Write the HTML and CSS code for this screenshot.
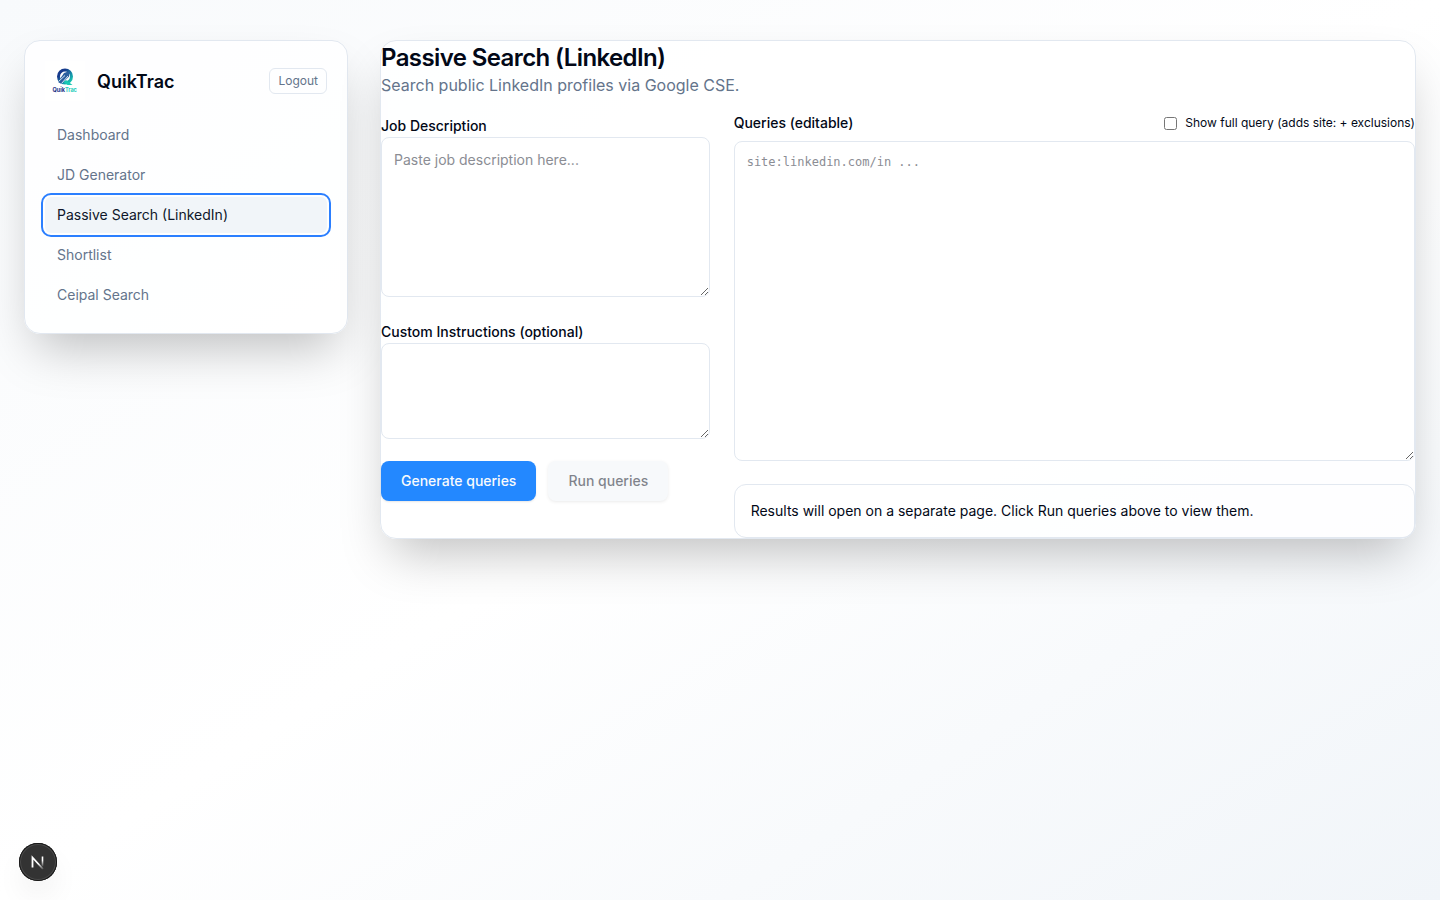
FILE: index.html
```html
<!DOCTYPE html>
<html lang="en">
<head>
<meta charset="utf-8">
<meta name="viewport" content="width=device-width, initial-scale=1">
<title>QuikTrac</title>
<link rel="stylesheet" href="styles.css">
</head>
<body>
<div class="layout">
  <aside class="card sidebar">
    <div class="brand-row">
      <svg class="logo" viewBox="0 0 80 80" role="img" aria-label="QuikTrac logo">
        <defs>
          <linearGradient id="ring" x1="0" y1="0" x2="1" y2="1">
            <stop offset="0.25" stop-color="#173a8c"/>
            <stop offset="0.6" stop-color="#1688a8"/>
            <stop offset="1" stop-color="#19d3b4"/>
          </linearGradient>
        </defs>
        <rect width="80" height="80" fill="#fff"/>
        <circle cx="40" cy="31" r="13" fill="#fff" stroke="url(#ring)" stroke-width="6"/>
        <path d="M42 38l13 10H45l-8-6z" fill="#19c9b4"/>
        <path d="M26 42l12-18 11-4-1 11-15 15z" fill="#2b5f9f"/>
        <path d="M27 41l13-12M33 45l13-15" stroke="#d5e5f2" stroke-width="2"/>
        <text class="logo-text" x="15" y="61"><tspan fill="#1d2f86">Quik</tspan><tspan fill="#25cdbb">Trac</tspan></text>
      </svg>
      <span class="brand">QuikTrac</span>
      <button class="logout" type="button">Logout</button>
    </div>
    <nav class="nav">
      <a href="#dashboard">Dashboard</a>
      <a href="#jd">JD Generator</a>
      <a class="active" href="#passive" aria-current="page">Passive Search (LinkedIn)</a>
      <a href="#shortlist">Shortlist</a>
      <a href="#ceipal">Ceipal Search</a>
    </nav>
  </aside>

  <main class="card">
    <header>
      <h1>Passive Search (LinkedIn)</h1>
      <p class="subtitle">Search public LinkedIn profiles via Google CSE.</p>
    </header>
    <div class="columns">
      <div class="stack">
        <div>
          <label class="label above" for="jd-text">Job Description</label>
          <textarea class="field jd" id="jd-text" placeholder="Paste job description here..."></textarea>
        </div>
        <div>
          <label class="label above" for="custom">Custom Instructions (optional)</label>
          <textarea class="field custom" id="custom"></textarea>
        </div>
        <div class="actions">
          <button class="btn primary" type="button">Generate queries</button>
          <button class="btn secondary" type="button" disabled>Run queries</button>
        </div>
      </div>
      <div class="stack wide">
        <div>
          <div class="query-head">
            <label class="label" for="queries">Queries (editable)</label>
            <label class="check"><input type="checkbox">Show full query (adds site: + exclusions)</label>
          </div>
          <textarea class="field queries" id="queries" placeholder="site:linkedin.com/in ..."></textarea>
        </div>
        <div class="results">Results will open on a separate page. Click Run queries above to view them.</div>
      </div>
    </div>
  </main>
</div>

<button class="dev-badge" type="button" aria-label="Open developer tools">
  <svg viewBox="0 0 38 38" width="38" height="38" fill="none">
    <defs>
      <linearGradient id="leg" x1="0" y1="13" x2="0" y2="24" gradientUnits="userSpaceOnUse">
        <stop offset="0.4" stop-color="#fff"/><stop offset="1" stop-color="#fff" stop-opacity="0"/>
      </linearGradient>
      <linearGradient id="diag" x1="20" y1="20" x2="25" y2="26" gradientUnits="userSpaceOnUse">
        <stop stop-color="#fff"/><stop offset="1" stop-color="#fff" stop-opacity="0.1"/>
      </linearGradient>
    </defs>
    <path d="M13.500 24.500V14.500L24 26" stroke="url(#diag)" stroke-width="1.800"/>
    <path d="M23.500 13.500v10" stroke="url(#leg)" stroke-width="1.600"/>
  </svg>
</button>
</body>
</html>
```
FILE: styles.css
```css
*, *::before, *::after { box-sizing: border-box; }
body {
  margin: 0;
  min-height: 100vh;
  font-family: Inter, "Liberation Sans", sans-serif;
  font-size: 16px;
  line-height: 24px;
  color: #020817;
  background: linear-gradient(to bottom right, #f8fafc, #fff 50%, #f1f5f9);
}
h1, p { margin: 0; }
button, textarea, input { font: inherit; color: inherit; }

.layout {
  display: grid;
  grid-template-columns: repeat(12, minmax(0, 1fr));
  gap: 32px;
  align-items: start;
  padding: 40px 24px;
}
.card {
  border: 1px solid #e2e8f0;
  border-radius: 16px;
  background: rgba(255, 255, 255, 0.8);
  box-shadow: 0 25px 50px -12px rgba(0, 0, 0, 0.25);
}
main.card { grid-column: span 9; }
.sidebar { grid-column: span 3; padding: 20px; }

.brand-row { display: flex; align-items: center; gap: 12px; margin-bottom: 16px; }
.logo { width: 40px; height: 40px; flex: none; }
.logo-text { font: 700 11px Inter, sans-serif; }
.brand { flex: 1; padding-top: 2px; font-size: 18px; line-height: 28px; font-weight: 600; }
.logout {
  padding: 4px 8px;
  border: 1px solid #e2e8f0;
  border-radius: 6px;
  background: none;
  color: #64748b;
  font-size: 12px;
  line-height: 16px;
}
.nav { display: grid; gap: 4px; }
.nav a {
  padding: 8px 12px;
  border-radius: 6px;
  color: #64748b;
  font-size: 14px;
  line-height: 20px;
  text-decoration: none;
}
.nav .active {
  background: #f1f5f9;
  color: #0f172a;
  outline: 2px solid #2b7fff;
  outline-offset: 2px;
}

h1 { padding-top: 2px; font-size: 24px; line-height: 30px; font-weight: 600; letter-spacing: -0.025em; }
.subtitle { color: #64748b; }
.columns {
  display: grid;
  grid-template-columns: repeat(3, minmax(0, 1fr));
  gap: 24px;
  padding-top: 16px;
}
.stack { display: flex; flex-direction: column; gap: 22px; }
.wide { grid-column: span 2; gap: 23px; }
.label { font-size: 14px; font-weight: 500; }
.above { display: block; padding-top: 2px; line-height: 22px; }
.field {
  display: block;
  width: 100%;
  padding: 12px;
  border: 1px solid #e2e8f0;
  border-radius: 8px;
  background: #fff;
  font-size: 14px;
  line-height: 20px;
}
.field::placeholder { color: #8b8d94; }
.jd { height: 160px; }
.custom { height: 96px; }
.queries {
  height: 320px;
  font-family: "DejaVu Sans Mono", monospace;
  font-size: 12px;
  line-height: 16px;
}
.query-head {
  display: flex;
  align-items: center;
  justify-content: space-between;
  margin-bottom: 8px;
  line-height: 20px;
}
.check { display: flex; align-items: center; gap: 8px; font-size: 12px; line-height: 16px; }
.check input { width: 13px; height: 13px; margin: 0; }

.actions { display: flex; gap: 12px; }
.btn {
  padding: 10px 20px;
  border: 0;
  border-radius: 8px;
  font-size: 14px;
  line-height: 20px;
  font-weight: 500;
  box-shadow: 0 1px 2px rgba(0, 0, 0, 0.1);
}
.primary { background: #2388ff; color: #f8fafc; }
.secondary { background: #f1f5f9; box-shadow: 0 1px 3px rgba(0, 0, 0, 0.15); opacity: 0.5; }
.results {
  padding: 16px;
  border: 1px solid #e2e8f0;
  border-radius: 12px;
  font-size: 14px;
  line-height: 20px;
}

.dev-badge {
  position: fixed;
  left: 19px;
  bottom: 19px;
  width: 38px;
  height: 38px;
  padding: 0;
  border: 0;
  border-radius: 50%;
  background: #333;
  box-shadow: inset 0 0 0 1px #171717, inset 0 0 0 2px #4a4a4a, 0 16px 32px -8px rgba(0, 0, 0, 0.14);
}
.dev-badge svg { display: block; }
```
